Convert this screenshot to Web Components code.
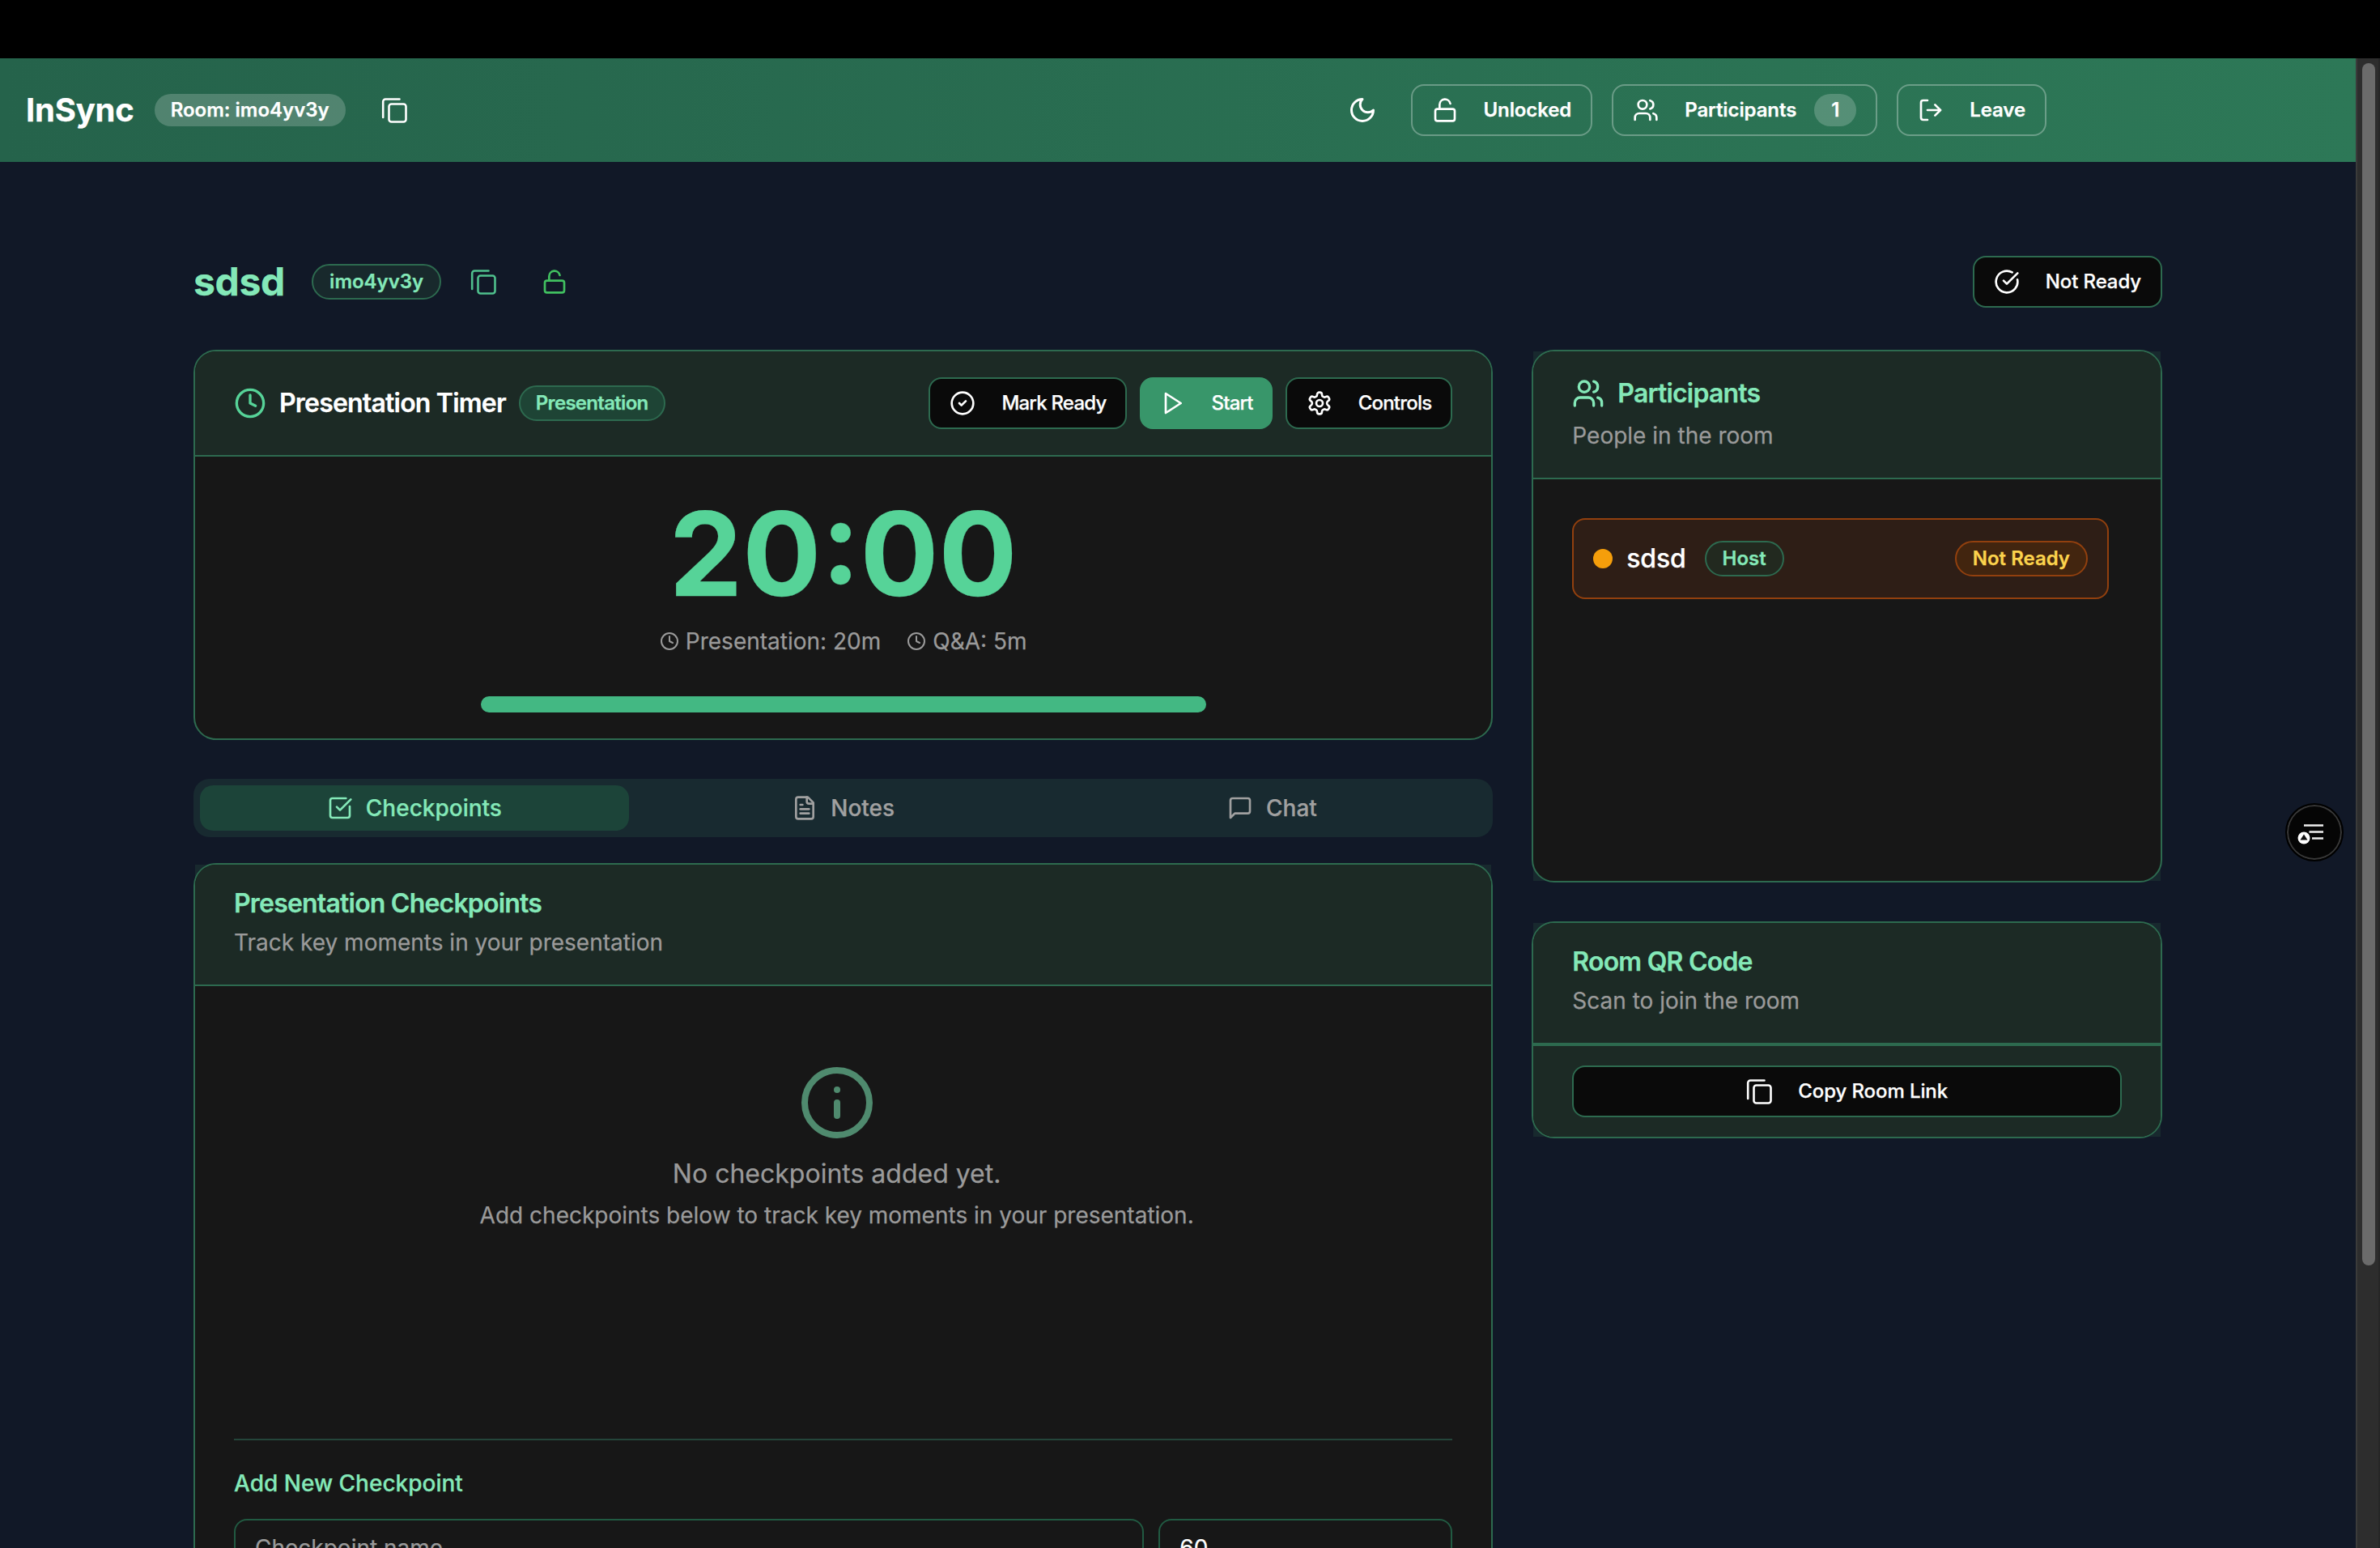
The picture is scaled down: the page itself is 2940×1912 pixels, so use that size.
<!DOCTYPE html>
<html lang="en">
<head>
<meta charset="utf-8">
<title>InSync</title>
<style>
  html, body { margin: 0; height: 100%; overflow: hidden; background: #000; }
  body { font-family: Inter, "Liberation Sans", sans-serif; color: #fff; -webkit-text-stroke: .25px; }
</style>
</head>
<body>
<app-shell>
  <app-header slot="header"></app-header>
  <room-title></room-title>
  <main-grid>
    <timer-panel slot="left"></timer-panel>
    <tab-bar slot="left"></tab-bar>
    <checkpoints-panel slot="left"></checkpoints-panel>
    <participants-panel slot="right"></participants-panel>
    <qr-panel slot="right"></qr-panel>
  </main-grid>
</app-shell>
<float-button></float-button>

<script>
const ICONS = {
  copy: '<path d="M2.200 25V5.500a3 3 0 0 1 3-3h17.300"/><rect x="9.500" y="8.500" width="21" height="22" rx="3"/>',
  moon: '<path d="M12 3a6 6 0 0 0 9 9 9 9 0 1 1-9-9Z"/>',
  lock: '<rect x="3" y="11" width="18" height="11" rx="2"/><path d="M7 11V7a5 5 0 0 1 9.900-1"/>',
  users: '<path d="M16 21v-2a4 4 0 0 0-4-4H6a4 4 0 0 0-4 4v2"/><circle cx="9" cy="7" r="4"/><path d="M22 21v-2a4 4 0 0 0-3-3.870"/><path d="M16 3.130a4 4 0 0 1 0 7.750"/>',
  leave: '<path d="M9 21H5a2 2 0 0 1-2-2V5a2 2 0 0 1 2-2h4"/><polyline points="16 17 21 12 16 7"/><line x1="21" y1="12" x2="9" y2="12"/>',
  checkbig: '<path d="M21.801 10A10 10 0 1 1 17 3.335"/><path d="m9 11 3 3L22 4"/>',
  check: '<circle cx="12" cy="12" r="10"/><path d="m9 12 2 2 4-4"/>',
  play: '<polygon points="6 3 20 12 6 21 6 3"/>',
  gear: '<path d="M12.220 2h-.440a2 2 0 0 0-2 2v.180a2 2 0 0 1-1 1.730l-.430.250a2 2 0 0 1-2 0l-.150-.080a2 2 0 0 0-2.730.730l-.220.380a2 2 0 0 0 .730 2.730l.150.100a2 2 0 0 1 1 1.720v.510a2 2 0 0 1-1 1.740l-.150.090a2 2 0 0 0-.730 2.730l.220.380a2 2 0 0 0 2.730.730l.150-.080a2 2 0 0 1 2 0l.430.250a2 2 0 0 1 1 1.730V20a2 2 0 0 0 2 2h.440a2 2 0 0 0 2-2v-.180a2 2 0 0 1 1-1.730l.430-.250a2 2 0 0 1 2 0l.150.080a2 2 0 0 0 2.730-.730l.220-.390a2 2 0 0 0-.730-2.730l-.150-.080a2 2 0 0 1-1-1.740v-.500a2 2 0 0 1 1-1.740l.150-.090a2 2 0 0 0 .730-2.730l-.220-.380a2 2 0 0 0-2.730-.730l-.150.080a2 2 0 0 1-2 0l-.430-.250a2 2 0 0 1-1-1.730V4a2 2 0 0 0-2-2z"/><circle cx="12" cy="12" r="3"/>',
  clock: '<circle cx="12" cy="12" r="10"/><polyline points="12 6 12 12 16 14"/>',
  square: '<path d="M21 10.500V19a2 2 0 0 1-2 2H5a2 2 0 0 1-2-2V5a2 2 0 0 1 2-2h12.500"/><path d="m9 11 3 3L22 4"/>',
  file: '<path d="M15 2H6a2 2 0 0 0-2 2v16a2 2 0 0 0 2 2h12a2 2 0 0 0 2-2V7Z"/><path d="M14 2v4a2 2 0 0 0 2 2h4"/><path d="M10 9H8"/><path d="M16 13H8"/><path d="M16 17H8"/>',
  chat: '<path d="M21 15a2 2 0 0 1-2 2H7l-4 4V5a2 2 0 0 1 2-2h14a2 2 0 0 1 2 2z"/>',
  info: '<circle cx="12" cy="12" r="10"/><path d="M12 16v-4"/><path d="M12 8h.010"/>'
};

function define(name, css, html) {
  customElements.define(name, class extends HTMLElement {
    constructor() {
      super();
      const root = this.attachShadow({ mode: 'open' });
      root.innerHTML = '<style>' + css + '</style>' + html;
    }
  });
}

customElements.define('ui-icon', class extends HTMLElement {
  static get observedAttributes() { return ['name', 'size']; }
  constructor() { super(); this.attachShadow({ mode: 'open' }); }
  connectedCallback() { this.render(); }
  attributeChangedCallback() { this.render(); }
  render() {
    const n = this.getAttribute('name') || 'info';
    const s = this.getAttribute('size') || 32;
    const vb = n === 'copy' ? 32 : 24;
    const sw = n === 'copy' ? 2.6 : 2;
    this.shadowRoot.innerHTML = '<style>:host{display:inline-flex;flex:none;line-height:0}svg{display:block}</style>' +
      '<svg xmlns="http://www.w3.org/2000/svg" width="' + s + '" height="' + s + '" viewBox="0 0 ' + vb + ' ' + vb + '" fill="none" stroke="currentColor" stroke-width="' + sw + '" stroke-linecap="round" stroke-linejoin="round">' + ICONS[n] + '</svg>';
  }
});

define('ui-btn', `
  :host{display:inline-flex;flex:none;box-sizing:border-box;height:64px;align-items:center;justify-content:center;gap:32px;padding:0 24px;
    border:2px solid #2d6a4f;border-radius:16px;background:#0a0a0a;color:#fff;font:500 24px/32px Inter,"Liberation Sans",sans-serif;letter-spacing:-.1px;white-space:nowrap}
  :host([variant=ghost]){background:transparent;border-color:rgba(255,255,255,.3);font-weight:600}
  :host([variant=solid]){background:#38966a;border-color:#38966a;padding:0 22px}
  :host([tight]){letter-spacing:-.8px}
  :host([wide]){display:flex}
`, '<slot name="icon"></slot><slot></slot><slot name="end"></slot>');

define('ui-badge', `
  :host{display:inline-flex;flex:none;box-sizing:border-box;height:44px;align-items:center;padding:0 20px;border:2px solid #2d6a4f;border-radius:999px;
    background:#18292c;color:#84e8b8;font:600 24px/32px Inter,"Liberation Sans",sans-serif;white-space:nowrap}
  :host([variant=room]){height:40px;border:0;background:rgba(255,255,255,.2);color:#fff;padding:0 20px}
  :host([variant=count]){height:40px;border:0;background:rgba(255,255,255,.2);color:#fff;padding:0 21px}
  :host([variant=mode]){background:#1e4435;letter-spacing:-.7px;padding:0 19px}
  :host([variant=host]){background:#22291f}
  :host([variant=warn]){background:#42250f;border-color:#92400e;color:#fcd34d}
`, '<slot></slot>');

define('ui-card', `
  :host{display:block;box-sizing:border-box}
  :host([corners]){padding:2px;background:#18292e content-box}
  .card{box-sizing:border-box;border:2px solid #2d6a4f;border-radius:28px;overflow:hidden;background:#171717}
  :host([corners]) .card{margin:-2px}
  .head{background:#1c2a25;border-bottom:2px solid #2d6a4f;padding:32px 48px}
  ::slotted([slot=title]){display:flex;align-items:center;gap:20px;margin:0;font:600 32px/32px Inter,"Liberation Sans",sans-serif;letter-spacing:-.8px;color:#84e8b8}
  ::slotted([slot=desc]){display:block;margin-top:12px;font:400 28px/40px Inter,"Liberation Sans",sans-serif;color:#9a9a9a}
`, '<div class="card"><div class="head" part="head"><slot name="title"></slot><slot name="desc"></slot></div><slot></slot></div>');

define('app-shell', `
  :host{display:flex;flex-direction:column;height:1912px;overflow:hidden}
  .black{height:72px;background:#000;flex:none}
  .row{display:flex;flex:1;min-height:0}
  .page{flex:1;min-width:0;background:#111827;overflow:hidden}
  .main{padding:116px 239px 0}
  .bar{flex:none;box-sizing:border-box;width:30px;background:#2d2d2d;border-left:2px solid #3b3b3b;border-right:2px solid #262626;padding:6px 4px 0 6px}
  .thumb{height:1485px;border-radius:8px;background:#6b6b6b}
`, `<div class="black"></div><div class="row"><div class="page"><slot name="header"></slot><div class="main"><slot></slot></div></div><div class="bar"><div class="thumb"></div></div></div>`);

define('app-header', `
  :host{display:flex;align-items:center;height:128px;box-sizing:border-box;padding:0 382px 0 32px;background:linear-gradient(to right,#25634b,#2d7857)}
  .logo{font:700 40px/48px Inter,"Liberation Sans",sans-serif;letter-spacing:-.2px;color:#fff}
  ui-badge{margin-left:25px;font-weight:600}
  .cp{margin-left:44px}
  .sp{flex:1}
  .moon{margin-right:42px}
  .g{display:flex;gap:24px}
  ui-badge.n{margin-left:-10px}
`, `<span class="logo">InSync</span>
  <ui-badge variant="room">Room: imo4yv3y</ui-badge>
  <ui-icon class="cp" name="copy"></ui-icon>
  <span class="sp"></span>
  <ui-icon class="moon" name="moon" size="36"></ui-icon>
  <div class="g">
    <ui-btn variant="ghost"><ui-icon slot="icon" name="lock"></ui-icon>Unlocked</ui-btn>
    <ui-btn variant="ghost"><ui-icon slot="icon" name="users"></ui-icon>Participants<ui-badge slot="end" class="n" variant="count">1</ui-badge></ui-btn>
    <ui-btn variant="ghost"><ui-icon slot="icon" name="leave"></ui-icon>Leave</ui-btn>
  </div>`);

define('room-title', `
  :host{display:flex;align-items:center;height:64px;margin-bottom:52px}
  h1{margin:0;font:700 48px/64px Inter,"Liberation Sans",sans-serif;letter-spacing:-.3px;color:#84e8b8}
  ui-badge{margin-left:33px}
  .c{margin-left:36px;color:#4fc08d}
  .l{margin-left:56px;color:#41c060}
  .sp{flex:1}
`, `<h1>sdsd</h1><ui-badge>imo4yv3y</ui-badge><ui-icon class="c" name="copy"></ui-icon><ui-icon class="l" name="lock"></ui-icon><span class="sp"></span>
  <ui-btn><ui-icon slot="icon" name="checkbig"></ui-icon>Not Ready</ui-btn>`);

define('main-grid', `
  :host{display:grid;grid-template-columns:repeat(3,1fr);gap:48px;align-items:start}
  .l{grid-column:span 2;display:flex;flex-direction:column;min-width:0}
  .r{display:flex;flex-direction:column;gap:48px;min-width:0}
  ::slotted(timer-panel){margin-bottom:48px}
  ::slotted(tab-bar){margin-bottom:32px}
`, '<div class="l"><slot name="left"></slot></div><div class="r"><slot name="right"></slot></div>');

define('timer-panel', `
  :host{display:block;box-sizing:border-box;border:2px solid #2d6a4f;border-radius:28px;overflow:hidden;background:#171717}
  .head{display:flex;align-items:center;height:130px;box-sizing:border-box;padding:0 48px;background:#1c2a25;border-bottom:2px solid #2d6a4f}
  .ic{color:#56d398;margin-right:16px}
  h2{margin:0;font:600 32px/40px Inter,"Liberation Sans",sans-serif;letter-spacing:-.8px;color:#fff}
  ui-badge{margin-left:16px}
  .sp{flex:1}
  .acts{display:flex;gap:16px}
  .body{padding:48px 0 32px;display:flex;flex-direction:column;align-items:center}
  .time{font:700 144px/144px Inter,"Liberation Sans",sans-serif;color:#56d398;letter-spacing:0}
  .sub{display:flex;gap:32px;margin-top:16px;font:400 28px/40px Inter,"Liberation Sans",sans-serif;color:#9a9a9a}
  .sub span{display:flex;align-items:center;gap:8px}
  .bar{width:896px;height:20px;margin-top:48px;border-radius:10px;background:#43b883}
`, `<div class="head"><ui-icon class="ic" name="clock" size="40"></ui-icon><h2>Presentation Timer</h2><ui-badge variant="mode">Presentation</ui-badge><span class="sp"></span>
    <div class="acts">
      <ui-btn tight><ui-icon slot="icon" name="check"></ui-icon>Mark Ready</ui-btn>
      <ui-btn tight variant="solid"><ui-icon slot="icon" name="play"></ui-icon>Start</ui-btn>
      <ui-btn tight><ui-icon slot="icon" name="gear"></ui-icon>Controls</ui-btn>
    </div></div>
  <div class="body"><div class="time">20:00</div>
    <div class="sub"><span><ui-icon name="clock" size="24"></ui-icon>Presentation: 20m</span><span><ui-icon name="clock" size="24"></ui-icon>Q&amp;A: 5m</span></div>
    <div class="bar"></div></div>`);

define('tab-bar', `
  :host{display:grid;grid-template-columns:repeat(3,1fr);box-sizing:border-box;height:72px;padding:8px;border-radius:20px;background:#182a30}
  div{display:flex;align-items:center;justify-content:center;gap:16px;border-radius:16px;font:500 28px/40px Inter,"Liberation Sans",sans-serif;color:#a0a0a0}
  .on{background:#1c4439;color:#84e8b8}
`, `<div class="on"><ui-icon name="square"></ui-icon>Checkpoints</div><div><ui-icon name="file"></ui-icon>Notes</div><div><ui-icon name="chat"></ui-icon>Chat</div>`);

define('checkpoints-panel', `
  :host{display:block}
  .body{padding:48px}
  .empty{box-sizing:border-box;height:511px;padding:48px 16px 0 0;display:flex;flex-direction:column;align-items:center;text-align:center;color:#9a9a9a}
  .i{color:#4f8a6e;margin-bottom:24px}
  .a{font:400 32px/32px Inter,"Liberation Sans",sans-serif}
  .b{margin-top:15px;font:400 28px/40px Inter,"Liberation Sans",sans-serif}
  .add{border-top:2px solid #24453a;padding-top:33px}
  h3{margin:0;font:500 28px/40px Inter,"Liberation Sans",sans-serif;color:#84e8b8}
  .f{display:flex;gap:18px;margin-top:24px}
  .in{box-sizing:border-box;height:72px;border:2px solid #215a42;border-radius:16px;padding:0 24px;display:flex;align-items:center;font:400 28px/40px Inter,"Liberation Sans",sans-serif}
  .n{flex:1;color:#9a9a9a}
  .m{width:363px;flex:none;color:#fff}
`, `<ui-card corners>
    <h2 slot="title">Presentation Checkpoints</h2>
    <span slot="desc">Track key moments in your presentation</span>
    <div class="body">
      <div class="empty"><ui-icon class="i" name="info" size="96"></ui-icon><div class="a">No checkpoints added yet.</div><div class="b">Add checkpoints below to track key moments in your presentation.</div></div>
      <div class="add"><h3>Add New Checkpoint</h3><div class="f"><div class="in n">Checkpoint name</div><div class="in m">60</div></div></div>
    </div>
  </ui-card>`);

define('participants-panel', `
  :host{display:block}
  .t{display:flex;align-items:center;gap:16px;height:40px;margin:0;font:600 32px/40px Inter,"Liberation Sans",sans-serif;letter-spacing:-.8px;color:#84e8b8}
  .body{box-sizing:border-box;height:496px;padding:48px 64px 0 48px}
  .row{display:flex;align-items:center;box-sizing:border-box;height:100px;padding:0 24px;border:2px solid #92400e;border-radius:16px;background:#2e1e16}
  .dot{width:24px;height:24px;border-radius:50%;background:#f59e0b;flex:none;margin-right:17px}
  .nm{font:500 32px/40px Inter,"Liberation Sans",sans-serif;color:#fff;margin-right:23px;letter-spacing:-.2px}
  .sp{flex:1}
`, `<ui-card corners>
    <div slot="title" class="t"><ui-icon name="users" size="40"></ui-icon>Participants</div>
    <span slot="desc">People in the room</span>
    <div class="body"><div class="row"><span class="dot"></span><span class="nm">sdsd</span><ui-badge variant="host">Host</ui-badge><span class="sp"></span><ui-badge variant="warn">Not Ready</ui-badge></div></div>
  </ui-card>`);

define('qr-panel', `
  :host{display:block}
  .body{background:#1c2a25;border-top:2px solid #2d6a4f;padding:24px 48px}
`, `<ui-card corners>
    <div slot="title">Room QR Code</div>
    <span slot="desc">Scan to join the room</span>
    <div class="body"><ui-btn wide><ui-icon slot="icon" name="copy"></ui-icon>Copy Room Link</ui-btn></div>
  </ui-card>`);

define('float-button', `
  :host{position:fixed;top:992px;left:2823px;box-sizing:border-box;width:72px;height:72px;border-radius:50%;background:#050505;border:2px solid #000;box-shadow:inset 0 0 0 2px #383838;display:flex;align-items:center;justify-content:center}
`, `<svg xmlns="http://www.w3.org/2000/svg" width="72" height="72" viewBox="0 0 72 72" style="flex:none;margin:-2px">
    <path d="M23 27.500h24M29.500 35.500h17.500M33 43.500h14" stroke="#eee" stroke-width="2.500" fill="none"/>
    <circle cx="23" cy="43" r="7.500" fill="#fff"/><polygon points="23,38.500 27.500,45.500 18.500,45.500" fill="#111"/>
  </svg>`);
</script>
</body>
</html>
